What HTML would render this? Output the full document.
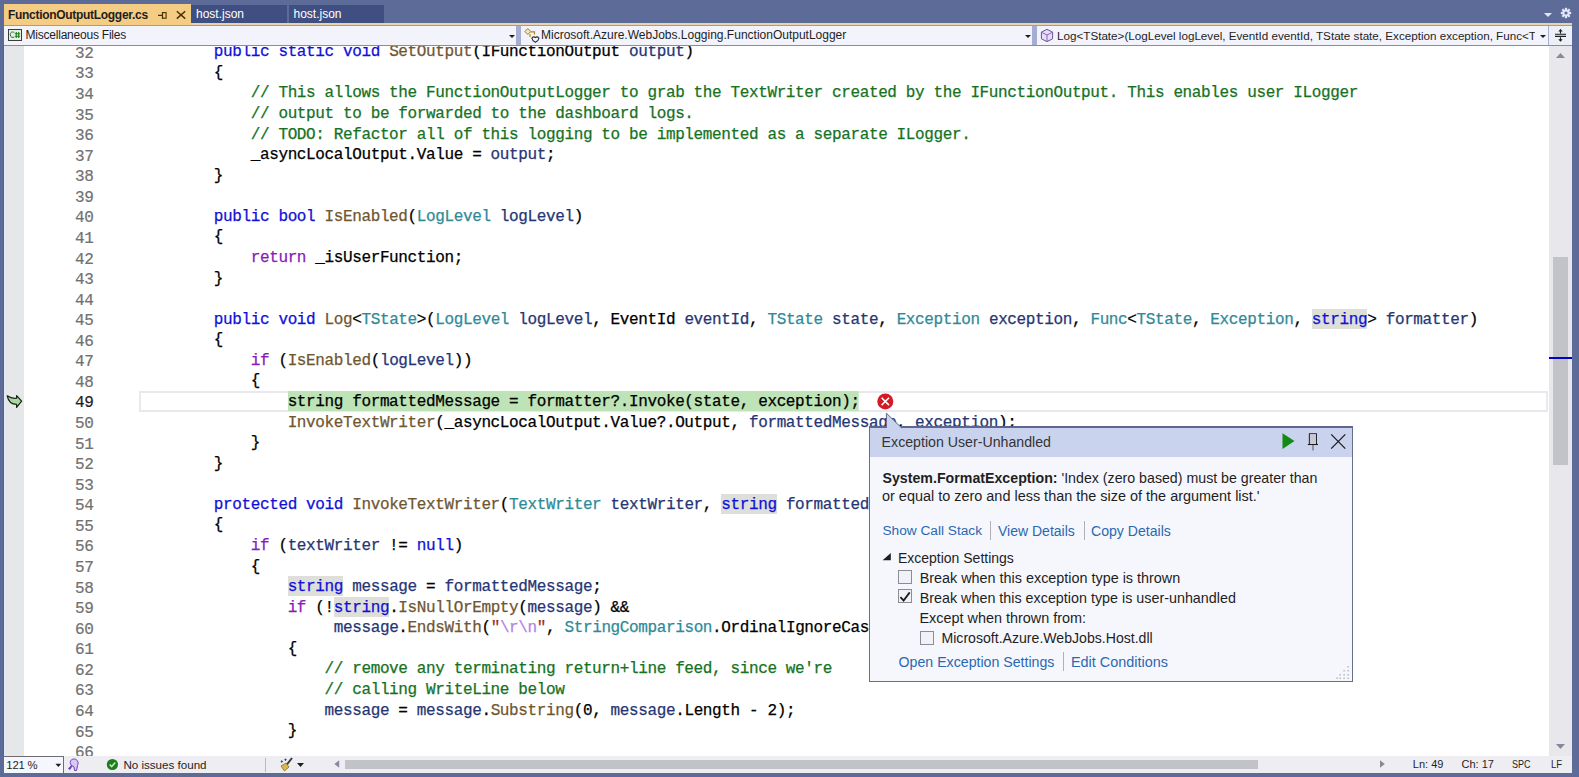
<!DOCTYPE html>
<html><head><meta charset="utf-8">
<style>
*{margin:0;padding:0;box-sizing:border-box}
html,body{width:1579px;height:777px;overflow:hidden}
body{background:#5d6b99;position:relative;font-family:"Liberation Sans",sans-serif;font-size:12px;color:#1e1e1e}
.abs{position:absolute}
/* tabs */
#tabwell{left:0;top:0;width:1579px;height:25px;background:#5d6b99}
.tab{position:absolute;top:4px;height:18px;white-space:pre;font-size:12px;line-height:18px}
#tab1{left:4px;width:187px;height:21px;background:#f5cc84;color:#1e1e1e;font-weight:bold;padding-left:4px;padding-top:1.5px;letter-spacing:-0.3px}
#tab2{left:191px;top:5px;height:17.5px;width:96px;background:#3f4f82;color:#fff;padding-left:5px;padding-top:0}
#tab3{left:288.5px;top:5px;height:17.5px;width:95px;background:#3f4f82;color:#fff;padding-left:5px;padding-top:0}
#tanline{left:191px;top:22.5px;width:1381px;height:2.5px;background:#ead3a8}
#navline{left:4px;top:25px;width:1568px;height:1px;background:#a89c86}
/* nav bar */
#nav{left:4px;top:26px;width:1568px;height:19px;background:#a5aed0}
.dd{position:absolute;top:0;height:19px;background:#f3f3fb;white-space:pre;line-height:19px;font-size:12px;color:#1e1e1e;overflow:hidden}
.ddarrow{position:absolute;top:9px;width:0;height:0;border-left:3px solid transparent;border-right:3px solid transparent;border-top:3.5px solid #1e1e1e}
#navbot{left:4px;top:45px;width:1568px;height:1.5px;background:#868ca4}
/* editor */
#editor{left:4px;top:46px;width:1545px;height:710px;background:#fff;overflow:hidden}
#glyph{left:0;top:0;width:20px;height:710px;background:#e6e7e8}
#codewrap{position:absolute;left:-4px;top:-46px;width:1579px;height:777px}
.ln{position:absolute;left:39.4px;width:54px;margin-top:1.5px;text-align:right;font-family:"Liberation Mono",monospace;font-size:16px;letter-spacing:-0.375px;-webkit-text-stroke:0.2px currentColor;line-height:20.57px;height:20.57px;color:#717171;white-space:pre}
.ln.cur{color:#1e1e1e}
.cl{position:absolute;left:140px;font-family:"Liberation Mono",monospace;font-size:16px;letter-spacing:-0.375px;-webkit-text-stroke:0.25px currentColor;line-height:20.57px;height:20.57px;color:#000;white-space:pre}
.k{color:#1010d8}
.c{color:#8a1ab8}
.m{color:#6f5631}
.t{color:#2f8a98}
.p{color:#263574}
.g{color:#16721f}
.s{color:#9a3022}
.e{color:#b283e8}
.h{color:#1010d8;background:#dedfd9;padding-top:1.7px}
.x{background:#bee3b6;color:#000;padding-top:2.1px;padding-bottom:0.3px;clip-path:inset(0 1px 0 0)}
#curbox{left:139px;top:391px;width:1409px;height:21px;border:2px solid #e8e8ee}
/* scrollbar */
#vscroll{left:1549px;top:46px;width:23px;height:710px;background:#e8e8ec}
#vthumb{left:1553px;top:257px;width:15px;height:208px;background:#c2c3c9}
#bluemark{left:1549px;top:357px;width:23px;height:2px;background:#0000cc}
/* status */
#status{left:4px;top:756px;width:1568px;height:17px;background:#eeeef2}
.st{position:absolute;top:756.2px;height:17px;line-height:17px;font-size:12px;color:#1e1e1e;white-space:pre}
/* popup */
#popup{left:869px;top:426px;width:484px;height:256px;background:#f6f7fd;border:1px solid #686e88;border-top:2px solid #5d6590}
#pophead{left:0;top:0;width:482px;height:28.5px;background:#cad3ee}
.pt{position:absolute;white-space:pre;font-size:14px;color:#1e1e1e;line-height:18px}
.lnk{color:#2a68b2}
.sep{position:absolute;width:1px;height:19px;background:#b0b0b8}
.cb{position:absolute;width:14px;height:14px;border:1px solid #8c8c94;background:#f1f2f8}
</style></head>
<body>
<div id="tabwell" class="abs"></div>
<div id="tab1" class="tab">FunctionOutputLogger.cs</div>
<div id="tab2" class="tab">host.json</div>
<div id="tab3" class="tab">host.json</div>
<div id="tanline" class="abs"></div>
<div id="navline" class="abs"></div>
<div id="nav" class="abs">
  <div class="dd" style="left:0;width:512px;padding-left:21.5px;font-size:12px;letter-spacing:-0.22px">Miscellaneous Files</div>
  <div class="ddarrow" style="left:504.5px"></div>
  <div class="dd" style="left:517px;width:511px;padding-left:20px">Microsoft.Azure.WebJobs.Logging.FunctionOutputLogger</div>
  <div class="ddarrow" style="left:1020.5px"></div>
  <div class="dd" style="left:1033px;width:511px"><div style="position:absolute;left:20px;top:0;width:478px;overflow:hidden;font-size:11.66px">Log&lt;TState&gt;(LogLevel logLevel, EventId eventId, TState state, Exception exception, Func&lt;T</div></div>
  <div class="ddarrow" style="left:1536px"></div>
  <div class="dd" style="left:1545px;width:23px;background:#eceef8"></div>
</div>
<div id="navbot" class="abs"></div>
<div id="editor" class="abs">
  <div id="glyph" class="abs"></div>
  <div id="codewrap">
  <div id="curbox" class="abs"></div>
<div class="ln" style="top:42.30px">32</div><div class="cl" style="top:42.30px">        <span class="k">public static void </span><span class="m">SetOutput</span>(IFunctionOutput <span class="p">output</span>)</div>
<div class="ln" style="top:62.87px">33</div><div class="cl" style="top:62.87px">        {</div>
<div class="ln" style="top:83.44px">34</div><div class="cl" style="top:83.44px">            <span class="g">// This allows the FunctionOutputLogger to grab the TextWriter created by the IFunctionOutput. This enables user ILogger</span></div>
<div class="ln" style="top:104.01px">35</div><div class="cl" style="top:104.01px">            <span class="g">// output to be forwarded to the dashboard logs.</span></div>
<div class="ln" style="top:124.58px">36</div><div class="cl" style="top:124.58px">            <span class="g">// TODO: Refactor all of this logging to be implemented as a separate ILogger.</span></div>
<div class="ln" style="top:145.15px">37</div><div class="cl" style="top:145.15px">            _asyncLocalOutput.Value = <span class="p">output</span>;</div>
<div class="ln" style="top:165.72px">38</div><div class="cl" style="top:165.72px">        }</div>
<div class="ln" style="top:186.29px">39</div><div class="cl" style="top:186.29px"></div>
<div class="ln" style="top:206.86px">40</div><div class="cl" style="top:206.86px">        <span class="k">public bool </span><span class="m">IsEnabled</span>(<span class="t">LogLevel</span> <span class="p">logLevel</span>)</div>
<div class="ln" style="top:227.43px">41</div><div class="cl" style="top:227.43px">        {</div>
<div class="ln" style="top:248.00px">42</div><div class="cl" style="top:248.00px">            <span class="c">return</span> _isUserFunction;</div>
<div class="ln" style="top:268.57px">43</div><div class="cl" style="top:268.57px">        }</div>
<div class="ln" style="top:289.14px">44</div><div class="cl" style="top:289.14px"></div>
<div class="ln" style="top:309.71px">45</div><div class="cl" style="top:309.71px">        <span class="k">public void </span><span class="m">Log</span>&lt;<span class="t">TState</span>&gt;(<span class="t">LogLevel</span> <span class="p">logLevel</span>, EventId <span class="p">eventId</span>, <span class="t">TState</span> <span class="p">state</span>, <span class="t">Exception</span> <span class="p">exception</span>, <span class="t">Func</span>&lt;<span class="t">TState</span>, <span class="t">Exception</span>, <span class="h">string</span>&gt; <span class="p">formatter</span>)</div>
<div class="ln" style="top:330.28px">46</div><div class="cl" style="top:330.28px">        {</div>
<div class="ln" style="top:350.85px">47</div><div class="cl" style="top:350.85px">            <span class="c">if</span> (<span class="m">IsEnabled</span>(<span class="p">logLevel</span>))</div>
<div class="ln" style="top:371.42px">48</div><div class="cl" style="top:371.42px">            {</div>
<div class="ln cur" style="top:391.99px">49</div><div class="cl" style="top:391.99px">                <span class="x">string formattedMessage = formatter?.Invoke(state, exception);</span></div>
<div class="ln" style="top:412.56px">50</div><div class="cl" style="top:412.56px">                <span class="m">InvokeTextWriter</span>(_asyncLocalOutput.Value?.Output, <span class="p">formattedMessage</span>, <span class="p">exception</span>);</div>
<div class="ln" style="top:433.13px">51</div><div class="cl" style="top:433.13px">            }</div>
<div class="ln" style="top:453.70px">52</div><div class="cl" style="top:453.70px">        }</div>
<div class="ln" style="top:474.27px">53</div><div class="cl" style="top:474.27px"></div>
<div class="ln" style="top:494.84px">54</div><div class="cl" style="top:494.84px">        <span class="k">protected void </span><span class="m">InvokeTextWriter</span>(<span class="t">TextWriter</span> <span class="p">textWriter</span>, <span class="h">string</span> <span class="p">formattedMessage</span>)</div>
<div class="ln" style="top:515.41px">55</div><div class="cl" style="top:515.41px">        {</div>
<div class="ln" style="top:535.98px">56</div><div class="cl" style="top:535.98px">            <span class="c">if</span> (<span class="p">textWriter</span> != <span class="k">null</span>)</div>
<div class="ln" style="top:556.55px">57</div><div class="cl" style="top:556.55px">            {</div>
<div class="ln" style="top:577.12px">58</div><div class="cl" style="top:577.12px">                <span class="h">string</span> <span class="p">message</span> = <span class="p">formattedMessage</span>;</div>
<div class="ln" style="top:597.69px">59</div><div class="cl" style="top:597.69px">                <span class="c">if</span> (!<span class="h">string</span>.<span class="m">IsNullOrEmpty</span>(<span class="p">message</span>) &amp;&amp;</div>
<div class="ln" style="top:618.26px">60</div><div class="cl" style="top:618.26px">                     <span class="p">message</span>.<span class="m">EndsWith</span>(<span class="s">&quot;</span><span class="e">\r\n</span><span class="s">&quot;</span>, <span class="t">StringComparison</span>.OrdinalIgnoreCase))</div>
<div class="ln" style="top:638.83px">61</div><div class="cl" style="top:638.83px">                {</div>
<div class="ln" style="top:659.40px">62</div><div class="cl" style="top:659.40px">                    <span class="g">// remove any terminating return+line feed, since we&#x27;re</span></div>
<div class="ln" style="top:679.97px">63</div><div class="cl" style="top:679.97px">                    <span class="g">// calling WriteLine below</span></div>
<div class="ln" style="top:700.54px">64</div><div class="cl" style="top:700.54px">                    <span class="p">message</span> = <span class="p">message</span>.<span class="m">Substring</span>(0, <span class="p">message</span>.Length - 2);</div>
<div class="ln" style="top:721.11px">65</div><div class="cl" style="top:721.11px">                }</div>
<div class="ln" style="top:741.68px">66</div><div class="cl" style="top:741.68px"></div>
  </div>
</div>
<div class="abs" style="left:3px;top:46px;width:1px;height:710px;background:#56618a"></div>
<div class="abs" style="left:4px;top:46px;width:1px;height:710px;background:#e4eaf7"></div>
<div id="vscroll" class="abs"></div>
<div id="vthumb" class="abs"></div>
<div id="bluemark" class="abs"></div>
<div id="status" class="abs"></div>
<div class="abs" style="left:4px;top:756px;width:59.5px;height:17px;background:#f6f6fd;border-top:1px solid #6c6c78"></div>
<div class="st" style="left:6.3px;top:757px;font-size:11.3px;letter-spacing:-0.2px">121 %</div>
<div class="abs" style="left:345px;top:760px;width:913px;height:9px;background:#c2c3c9"></div>
<div class="st" style="left:123.4px;font-size:11.6px">No issues found</div>
<div class="st" style="left:1412.8px;font-size:11px">Ln: 49</div>
<div class="st" style="left:1461.5px;font-size:11px">Ch: 17</div>
<div class="st" style="left:1512.4px;font-size:11px;transform:scaleX(0.82);transform-origin:0 0">SPC</div>
<div class="st" style="left:1551px;font-size:11px;transform:scaleX(0.87);transform-origin:0 0">LF</div>
<div id="popup" class="abs">
  <div id="pophead" class="abs"></div>
  <div class="pt" style="left:11.6px;top:5px;font-size:14.18px;color:#333">Exception User-Unhandled</div>
  <div class="pt" style="left:12.5px;top:40.6px;font-size:14.2px"><b>System.FormatException:</b> 'Index (zero based) must be greater than</div>
  <div class="pt" style="left:12px;top:59px;font-size:14.45px">or equal to zero and less than the size of the argument list.'</div>
  <div class="pt lnk" style="left:12.4px;top:93.5px;font-size:13.7px">Show Call Stack</div>
  <div class="sep" style="left:120px;top:93px"></div>
  <div class="pt lnk" style="left:128px;top:93.5px;font-size:14px">View Details</div>
  <div class="sep" style="left:213.5px;top:93px"></div>
  <div class="pt lnk" style="left:221px;top:93.5px;font-size:14.1px">Copy Details</div>
  <div class="pt" style="left:27.9px;top:120.7px;font-size:14px">Exception Settings</div>
  <div class="cb" style="left:28.2px;top:142.2px"></div>
  <div class="pt" style="left:49.7px;top:140.6px;font-size:14.38px">Break when this exception type is thrown</div>
  <div class="cb" style="left:28.2px;top:161.3px"></div>
  <div class="pt" style="left:49.7px;top:160.7px;font-size:14.33px">Break when this exception type is user-unhandled</div>
  <div class="pt" style="left:49.4px;top:180.8px;font-size:14.43px">Except when thrown from:</div>
  <div class="cb" style="left:50px;top:202.5px"></div>
  <div class="pt" style="left:71.5px;top:201px;font-size:14.1px">Microsoft.Azure.WebJobs.Host.dll</div>
  <div class="pt lnk" style="left:28.6px;top:225px;font-size:14.17px">Open Exception Settings</div>
  <div class="sep" style="left:192.6px;top:224px"></div>
  <div class="pt lnk" style="left:201px;top:225px;font-size:14.42px">Edit Conditions</div>
</div>
</div>

<svg class="abs" style="left:0;top:0" width="1579" height="777" viewBox="0 0 1579 777">
 <!-- tab pin -->
 <g stroke="#4a3300" stroke-width="1.1" fill="none">
  <path d="M158 15.4H162.5M162.5 12V19"/>
  <rect x="162.5" y="12.6" width="3.6" height="5.6"/>
 </g>
 <!-- tab close -->
 <path d="M176.8 11.2L185.2 18.6M185.2 11.2L176.8 18.6" stroke="#4a3300" stroke-width="1.5"/>
 <!-- tabwell dropdown + gear -->
 <path d="M1544 13H1552L1548 17Z" fill="#e3e6f8"/>
 <g transform="translate(1566 13)" fill="#e3e6f8">
  <circle r="3.6"/>
  <g id="teeth"><rect x="-1.1" y="-5.2" width="2.2" height="10.4"/><rect x="-1.1" y="-5.2" width="2.2" height="10.4" transform="rotate(45)"/><rect x="-1.1" y="-5.2" width="2.2" height="10.4" transform="rotate(90)"/><rect x="-1.1" y="-5.2" width="2.2" height="10.4" transform="rotate(135)"/></g>
  <circle r="1.6" fill="#5d6b99"/>
 </g>
 <!-- C# icon -->
 <rect x="8.5" y="29.5" width="13" height="11" fill="#e2f2e2" stroke="#3c3c3c" stroke-width="1"/>
 <path d="M14.4 32.7C12 31 10 32.6 10.3 34.9C10.5 37.3 12.6 38 14.4 37" stroke="#3d6b3d" stroke-width="1" fill="none"/>
 <path d="M16.3 32V38M18.7 32V38M14.9 33.7H20.1M14.9 36.2H20.1" stroke="#1e7b1e" stroke-width="1.05"/>
 <!-- class icon (namespace) -->
 <path d="M524.8 31.5L527.8 28.5L530.8 31.5L527.8 34.5Z" fill="#f6e6a8" stroke="#8a7430" stroke-width="0.9"/>
 <path d="M530.5 31.8H534.5V34.5M530 34V37" stroke="#b08a20" stroke-width="1.2" fill="none"/>
 <path d="M531.9 38.2Q533.6 35.9 535.4 37.6Q537.2 35.9 538.9 38.2Q538.6 40.6 535.4 42.3Q532.2 40.6 531.9 38.2Z" fill="#f4f4fb" stroke="#2a2a33" stroke-width="1.1"/>
 <!-- cube icon -->
 <path d="M1047 29.3L1052.6 32.2V38.8L1047 41.6L1041.4 38.8V32.2Z" fill="#e8dcfa" stroke="#6a4f9a" stroke-width="1"/>
 <path d="M1041.4 32.2L1047 35L1052.6 32.2M1047 35V41.6" stroke="#7b5faa" stroke-width="0.9" fill="none"/>
 <!-- split icon -->
 <path d="M1555 34.3H1566M1555 36.4H1566M1560.5 29.8V33.5M1560.5 37.2V41" stroke="#1e1e1e" stroke-width="1.1"/>
 <path d="M1558.3 31.6L1560.5 29L1562.7 31.6Z M1558.3 39.2L1560.5 41.8L1562.7 39.2Z" fill="#1e1e1e"/>
 <!-- vscroll arrows -->
 <path d="M1556 58H1565L1560.5 53Z" fill="#868999"/>
 <path d="M1556 744H1565L1560.5 749Z" fill="#868999"/>
 <!-- glyph arrow -->
 <path d="M7.2 395.8C10.5 398.2 13.5 398.6 16.6 398.2L16.6 395.6L21.6 401.2L16.6 407.4L16.6 404.4C12 404.4 8.6 402.5 7.2 395.8Z" fill="#a9d8a2" stroke="#142214" stroke-width="1.2" stroke-linejoin="round"/>
 <!-- error icon -->
 <circle cx="885.3" cy="401.4" r="8" fill="#d41a24"/>
 <path d="M881.6 397.7L889 405.1M889 397.7L881.6 405.1" stroke="#fff" stroke-width="1.6"/>
 <!-- popup tail -->
 <path d="M886.4 413.2V428H901.7Z" fill="#cad3ee"/>
 <path d="M886.4 428V413.2L901.7 428" stroke="#5c6490" stroke-width="1" fill="none"/>
 <!-- status bar icons -->
 <path d="M68 768.5L71.5 765L72.5 766L70 770Z" fill="#6a3fb0"/>
 <path d="M71 765C69 761 71.5 758.8 74.2 759C77.5 759.2 79 762.5 77.5 765.5L76.5 770.5H74.5L74 767Z" fill="#d9c9f5" stroke="#6a3fb0" stroke-width="1"/>
 <circle cx="112.4" cy="764.5" r="5.6" fill="#1e7b1e"/>
 <path d="M109.6 764.5L111.7 766.6L115.3 762.6" stroke="#b8f0b8" stroke-width="1.5" fill="none"/>
 <path d="M265.5 758V772" stroke="#b9b9c2" stroke-width="1"/>
 <path d="M292 758L286.5 765" stroke="#3a3a3a" stroke-width="2"/>
 <path d="M281 766L286 763L289 767L284.5 771Z" fill="#d8b850" stroke="#8a7020" stroke-width="0.8"/>
 <path d="M281.8 760.5L282.6 761.5L281.8 762.5L281 761.5Z M285.5 758.7L286.3 759.7L285.5 760.7L284.7 759.7Z" fill="#2a2a70" stroke="#2a2a70" stroke-width="0.6"/>
 <path d="M297 763H304L300.5 767Z" fill="#1e1e1e"/>
 <path d="M339.2 760.2V767.8L334.4 764Z" fill="#868999"/>
 <path d="M1380 760.2V767.8L1384.8 764Z" fill="#868999"/>
 <path d="M55.5 763.8H61.2L58.35 767Z" fill="#1e1e1e"/>

 <g fill="#a8a8b4">
  <rect x="1347.5" y="666" width="1.2" height="1.5"/>
  <rect x="1347.5" y="670" width="1.2" height="1.5"/><rect x="1343.5" y="670" width="1.2" height="1.5"/>
  <rect x="1347.5" y="674" width="1.2" height="1.5"/><rect x="1343.5" y="674" width="1.2" height="1.5"/><rect x="1339.5" y="674" width="1.2" height="1.5"/>
  <rect x="1347.5" y="677.5" width="1.2" height="1.5"/><rect x="1343.5" y="677.5" width="1.2" height="1.5"/><rect x="1339.5" y="677.5" width="1.2" height="1.5"/><rect x="1336.5" y="677.5" width="1.2" height="1.5"/>
 </g>
 <path d="M63.5 756V773" stroke="#6c6c78" stroke-width="1"/>
 <!-- popup icons -->
 <path d="M1282.5 433.2L1294.5 441.1L1282.5 449Z" fill="#138a13"/>
 <g stroke="#1e1e1e" stroke-width="1.1" fill="none">
  <path d="M1309.4 444V433.7H1316.4V444"/>
  <path d="M1307.8 444.5H1318"/>
 </g>
 <rect x="1309.9" y="434.2" width="6" height="9.8" fill="#c8c9d6"/>
 <path d="M1313 445V450.5" stroke="#6a6a70" stroke-width="1.2"/>
 <path d="M1331.2 434.4L1345.3 448.6M1345.3 434.4L1331.2 448.6" stroke="#1e1e1e" stroke-width="1.3"/>
 <path d="M890.8 553V560.2H882.6Z" fill="#1e1e1e"/>
 <path d="M900.4 597.2L903.6 600.5L909.7 592.4" stroke="#1e1e1e" stroke-width="1.8" fill="none"/>
</svg>
</body></html>
